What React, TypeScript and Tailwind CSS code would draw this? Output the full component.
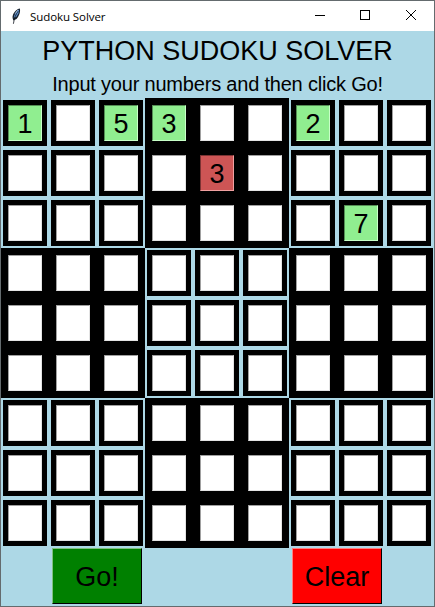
import React from "react";

const entries: Record<string, { digit: string; invalid?: boolean }> = {
  "0-0": { digit: "1" },
  "0-2": { digit: "5" },
  "0-3": { digit: "3" },
  "0-6": { digit: "2" },
  "1-4": { digit: "3", invalid: true },
  "2-7": { digit: "7" },
};

function Feather() {
  return (
    <svg width="10" height="17" viewBox="0 0 10 17" className="block">
      <path d="M8.8 .4 C6 .8 3 4 2 6.8 C1.2 9 1.5 10.7 2.4 12.4 L5.5 11 C7.9 8 9.8 3.6 8.8 .4Z" fill="#16202c" />
      <path d="M7.9 1.5 C5.3 3.2 3.3 6.2 2.7 9.8 L5.2 8.9 C7.1 6.5 8.4 4 7.9 1.5Z" fill="#5b8fd0" />
      <path d="M7.2 3 C5 6 3.3 9.6 2.4 15.8" fill="none" stroke="#111820" strokeWidth=".8" />
      <path d="M6.8 2.2 L4.2 5.6" fill="none" stroke="#b5d4f4" strokeWidth=".9" />
    </svg>
  );
}

function TitleBar() {
  return (
    <header className="flex h-[30px] items-center bg-white pl-[10px]">
      <Feather />
      <span className="ml-[9px] flex-1 whitespace-nowrap font-['Open_Sans',sans-serif] text-[11.5px] leading-[15px] tracking-[-0.08px] text-black">
        Sudoku Solver
      </span>
      <svg width="120" height="30" viewBox="0 0 120 30" className="block" fill="none" stroke="#000" shapeRendering="crispEdges">
        <path d="M1 14.5H11" />
        <rect x="46.5" y="9.5" width="9" height="9" />
        <path d="M92 9L102 19M102 9L92 19" shapeRendering="auto" />
      </svg>
    </header>
  );
}

function Cell({ row, col }: { row: number; col: number }) {
  const heavy = (Math.floor(row / 3) + Math.floor(col / 3)) % 2 === 1;
  const entry = entries[`${row}-${col}`];
  const tone = !entry
    ? "bg-white border-t-[#a0a0a0] border-l-[#a0a0a0] border-r-[#e3e3e3] border-b-[#e3e3e3]"
    : entry.invalid
      ? "bg-[#cd5555] border-t-[#7b3333] border-l-[#7b3333] border-r-[#f0a0a0] border-b-[#f0a0a0]"
      : "bg-[#90ee90] border-t-[#568f56] border-l-[#568f56] border-r-[#c8ffc8] border-b-[#c8ffc8]";
  return (
    <div className={`flex p-[2px] ${heavy ? "bg-black" : "bg-[#add8e6]"}`}>
      <div className="flex flex-1 bg-black p-[5px]">
        <div className={`flex h-[36px] flex-1 justify-center border text-[27px] leading-[36px] ${tone}`}>
          {entry?.digit}
        </div>
      </div>
    </div>
  );
}

export default function App() {
  return (
    <div className="flex h-[607px] w-[435px] flex-col border border-[#646b6e] bg-[#add8e6] font-['Liberation_Sans',Arial,sans-serif] text-black">
      <TitleBar />
      <h1 className="h-[38px] whitespace-nowrap text-center text-[27px] leading-[40px]">PYTHON SUDOKU SOLVER</h1>
      <p className="h-[29px] whitespace-nowrap text-center text-[20px] leading-[31px] tracking-[-0.2px]">
        Input your numbers and then click Go!
      </p>
      <main className="grid w-[432px] grid-cols-[repeat(9,48px)] grid-rows-[repeat(9,50px)]">
        {Array.from({ length: 81 }, (_, i) => (
          <Cell key={i} row={Math.floor(i / 9)} col={i % 9} />
        ))}
      </main>
      <footer className="flex gap-[150px] pl-[51px]">
        <button className="h-[56px] w-[90px] border border-t-[#80c080] border-l-[#80c080] border-r-black border-b-black bg-[#008000] pt-[2px] text-[27px] leading-[52px]">
          Go!
        </button>
        <button className="h-[56px] w-[90px] border border-t-[#ff8080] border-l-[#ff8080] border-r-black border-b-black bg-[#ff0000] pt-[2px] text-[27px] leading-[52px]">
          Clear
        </button>
      </footer>
    </div>
  );
}
